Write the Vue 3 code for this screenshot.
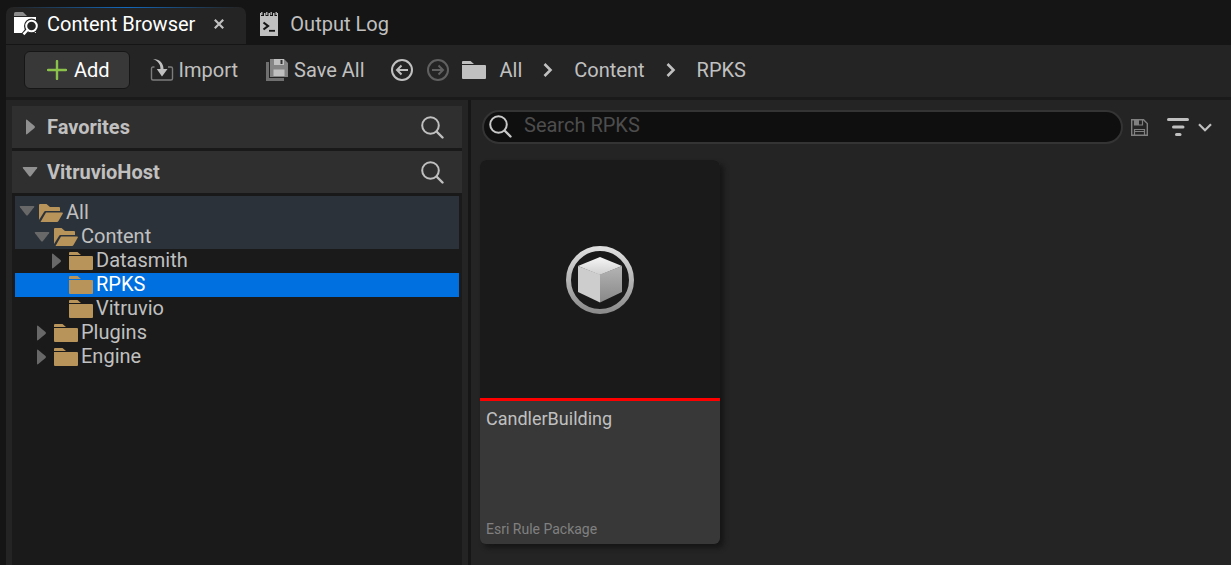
<script setup>
import { ref } from 'vue'

const query = ref('')
const crumbs = ['All', 'Content', 'RPKS']
const sections = [
  { name: 'Favorites', open: false },
  { name: 'VitruvioHost', open: true },
]
const nodes = [
  { name: 'All', depth: 0, state: 'open', path: true },
  { name: 'Content', depth: 1, state: 'open', path: true },
  { name: 'Datasmith', depth: 2, state: 'closed' },
  { name: 'RPKS', depth: 2, state: 'leaf', selected: true },
  { name: 'Vitruvio', depth: 2, state: 'leaf' },
  { name: 'Plugins', depth: 1, state: 'closed' },
  { name: 'Engine', depth: 1, state: 'closed' },
]
</script>

<template>
  <div class="window">
    <nav class="tabs" aria-label="Panels">
      <div class="tab active">
        <button class="tab-name" type="button">
          <svg width="25" height="24" viewBox="0 0 25 24" aria-hidden="true">
            <path d="M0 4V1.5Q0 0 1.5 0H9L13 4Z" fill="#8c8c8c" />
            <path d="M0 5H22V21H0Z" fill="#fff" />
            <circle cx="17.5" cy="14" r="7.5" fill="#242424" />
            <path d="M12 16L7 22L10 24L15 20Z" fill="#242424" />
            <circle cx="17.5" cy="14" r="5.3" fill="#242424" stroke="#fff" stroke-width="2" />
            <path d="M13.8 17.8L9.5 22.4" stroke="#fff" stroke-width="2.4" />
          </svg>
          <span>Content Browser</span>
        </button>
        <button class="close" type="button" aria-label="Close Content Browser">
          <svg width="10" height="10" viewBox="0 0 10 10" aria-hidden="true">
            <path d="M.8 .8L9.2 9.2M9.2 .8L.8 9.2" stroke="#c0c0c0" stroke-width="2.2" />
          </svg>
        </button>
      </div>
      <button class="tab output" type="button">
        <svg width="18" height="24" viewBox="0 0 18 24" aria-hidden="true">
          <path d="M0 1H1V4H4V1H5.5V4H8.5V1H10V4H13V1H14.5V4H17V1H18V24H0Z" fill="#c0c0c0" />
          <path d="M1.8 0V3M6.8 0V3M11.2 0V3M16.2 0V3" stroke="#c0c0c0" stroke-width="1.3" />
          <path d="M3.500 10.500L8 14L3.500 17.500" fill="none" stroke="#151515" stroke-width="2.2" />
          <path d="M9 18.800H15" stroke="#151515" stroke-width="1.8" />
        </svg>
        <span>Output Log</span>
      </button>
    </nav>

    <header class="toolbar">
      <button class="add" type="button">
        <svg width="20" height="20" viewBox="0 0 20 20" aria-hidden="true">
          <path d="M10 1V19M1 10H19" stroke="#8bc24a" stroke-width="2.4" stroke-linecap="round" />
        </svg>
        <span>Add</span>
      </button>
      <button class="tool import" type="button">
        <svg width="24" height="24" viewBox="0 0 24 24" aria-hidden="true">
          <path d="M4.500 9H3Q1.500 9 1.500 10.500V20.500Q1.500 22 3 22H21Q22.500 22 22.500 20.500V10.500Q22.500 9 21 9H18" fill="none" stroke="#7c7c7c" stroke-width="1.4" />
          <path d="M3 1C9.500 1 13.500 5 13.500 11H17.500L12 18.500L6.800 11H10.500C10.500 6 8 3 3 1Z" fill="#c0c0c0" />
        </svg>
        <span>Import</span>
      </button>
      <button class="tool save" type="button">
        <svg width="22" height="22" viewBox="0 0 22 22" aria-hidden="true">
          <path d="M0 3H3V19H18V22H0Z" fill="#707070" />
          <path d="M4 0H18L22 4V18H4Z" fill="#858585" />
          <path d="M8 0H18V6H8Z" fill="#c0c0c0" />
          <path d="M14.500 1H16.500V5H14.500Z" fill="#333" />
          <path d="M7.500 10.500H18.500V17H7.500Z" fill="#c0c0c0" />
        </svg>
        <span>Save All</span>
      </button>
      <button class="round back" type="button" aria-label="Back">
        <svg width="22" height="22" viewBox="0 0 22 22" fill="none" stroke="#c0c0c0" stroke-width="2" aria-hidden="true">
          <circle cx="11" cy="11" r="10" />
          <path d="M17 11H6.500M10.500 6.500L6 11L10.500 15.500" />
        </svg>
      </button>
      <button class="round forward" type="button" aria-label="Forward">
        <svg width="22" height="22" viewBox="0 0 22 22" fill="none" stroke="#606060" stroke-width="2" aria-hidden="true">
          <circle cx="11" cy="11" r="10" />
          <path d="M5 11H15.500M11.500 6.500L16 11L11.500 15.500" />
        </svg>
      </button>
      <button class="round folder" type="button" aria-label="Choose a path">
        <svg width="24" height="18" viewBox="0 0 24 18" fill="#c0c0c0" aria-hidden="true">
          <path d="M0 3V1Q0 0 1 0H8.500L12 3Z" />
          <path d="M0 4H23Q24 4 24 5V17Q24 18 23 18H1Q0 18 0 17Z" />
        </svg>
      </button>
      <nav class="crumbs" aria-label="Path">
        <template v-for="(crumb, i) in crumbs" :key="crumb">
          <svg v-if="i" width="10" height="14" viewBox="0 0 10 14" aria-hidden="true">
            <path d="M1.500 1L7.500 7L1.500 13" fill="none" stroke="#c0c0c0" stroke-width="2.600" />
          </svg>
          <a href="#">{{ crumb }}</a>
        </template>
      </nav>
    </header>

    <main class="body">
      <aside class="sources">
        <div v-for="s in sections" :key="s.name" class="section">
          <button class="section-name" type="button" :aria-expanded="s.open">
            <svg width="16" height="16" viewBox="0 0 16 16" fill="#909090" aria-hidden="true">
              <path v-if="s.open" d="M1.500 3H14.500Q16 3 15 4.300L9 12Q8 13 7 12L1 4.300Q0 3 1.500 3Z" />
              <path v-else d="M4 1.500Q4 0 5.300 1L12.500 7Q13.500 8 12.500 9L5.300 15Q4 16 4 14.500Z" />
            </svg>
            <span>{{ s.name }}</span>
          </button>
          <button class="find" type="button" :aria-label="'Search ' + s.name">
            <svg width="23" height="23" viewBox="0 0 23 23" fill="none" stroke="#c0c0c0" stroke-width="2" aria-hidden="true">
              <circle cx="9.500" cy="9.500" r="8.300" />
              <path d="M15.500 15.500L21.500 21.500" stroke-width="2.400" stroke-linecap="round" />
            </svg>
          </button>
        </div>
        <ul class="tree" role="tree">
          <li
            v-for="n in nodes"
            :key="n.name"
            role="treeitem"
            :aria-selected="!!n.selected"
            :class="['node', 'depth-' + n.depth, { path: n.path, selected: n.selected }]"
          >
            <svg class="arrow" width="16" height="16" viewBox="0 0 16 16" fill="#686868" aria-hidden="true">
              <path v-if="n.state === 'open'" d="M1.500 3H14.500Q16 3 15 4.300L9 12Q8 13 7 12L1 4.300Q0 3 1.500 3Z" />
              <path v-else-if="n.state === 'closed'" d="M3 1.500Q3 0 4.300 1L11.500 7Q12.500 8 11.500 9L4.300 15Q3 16 3 14.500Z" />
            </svg>
            <svg class="dir" width="24" height="18" viewBox="0 0 24 18" fill="#b8935a" aria-hidden="true">
              <template v-if="n.state === 'open'">
                <path d="M1 0H7.500L11 3H20Q21 3 21 4V7H6.500Q5.500 7 5 8L0 16V1Q0 0 1 0Z" />
                <path d="M7 8.500H23Q24.400 8.500 23.700 9.700L19.500 17Q19 18 18 18H1.500Z" />
              </template>
              <template v-else>
                <path d="M0 3V1Q0 0 1 0H8.500L12 3Z" />
                <path d="M0 4H23Q24 4 24 5V17Q24 18 23 18H1Q0 18 0 17Z" />
              </template>
            </svg>
            <span class="label">{{ n.name }}</span>
          </li>
        </ul>
      </aside>

      <section class="assets">
        <div class="filters">
          <label class="search">
            <svg width="23" height="23" viewBox="0 0 23 23" fill="none" stroke="#c8c8c8" stroke-width="2" aria-hidden="true">
              <circle cx="9.500" cy="9.500" r="8.300" />
              <path d="M15.500 15.500L21.500 21.500" stroke-width="2.400" stroke-linecap="round" />
            </svg>
            <input v-model="query" type="text" placeholder="Search RPKS" aria-label="Search RPKS" />
          </label>
          <button class="round keep" type="button" aria-label="Save search">
            <svg width="17" height="17" viewBox="0 0 17 17" fill="none" stroke="#808080" aria-hidden="true">
              <path d="M.7 .7H12.500L16.300 4.500V16.300H.7Z" stroke-width="1.400" />
              <path d="M3.500 1V6H11.500V1M3.500 16V10.500H13.500V16" stroke-width="1.200" />
              <path d="M4 1H8V6H4Z" fill="#808080" stroke="none" />
              <path d="M4 12.500H13" stroke-width="1" />
            </svg>
          </button>
          <button class="round filter" type="button" aria-label="Filters">
            <svg width="22" height="18" viewBox="0 0 22 18" fill="#c0c0c0" aria-hidden="true">
              <rect width="22" height="3" rx="1.500" />
              <rect x="5" y="7.500" width="12.500" height="3" rx="1.500" />
              <rect x="8" y="15" width="6.500" height="3" rx="1.500" />
            </svg>
            <svg width="14" height="9" viewBox="0 0 14 9" aria-hidden="true">
              <path d="M1 1.300L7 7.300L13 1.300" fill="none" stroke="#c0c0c0" stroke-width="2.200" />
            </svg>
          </button>
        </div>
        <div class="grid">
          <article class="card">
            <div class="thumb">
              <svg width="68" height="68" viewBox="0 0 68 68" aria-hidden="true">
                <defs>
                  <linearGradient id="ring" x1="0" y1="0" x2="0" y2="1">
                    <stop offset="0" stop-color="#dedede" />
                    <stop offset="1" stop-color="#8c8c8c" />
                  </linearGradient>
                  <linearGradient id="top" x1="0" y1="0" x2="0" y2="1">
                    <stop offset="0" stop-color="#f6f6f6" />
                    <stop offset="1" stop-color="#cfcfcf" />
                  </linearGradient>
                  <linearGradient id="side" x1="0" y1="0" x2="0" y2="1">
                    <stop offset="0" stop-color="#b4b4b4" />
                    <stop offset="1" stop-color="#888" />
                  </linearGradient>
                </defs>
                <circle cx="34" cy="34" r="31.500" fill="none" stroke="url(#ring)" stroke-width="5" />
                <path d="M34 11L56 20L34 29L12 20Z" fill="url(#top)" />
                <path d="M12 20L34 28.500V56.500L12 46Z" fill="#cdcdcd" />
                <path d="M56 20L34 28.500V56.500L56 46Z" fill="url(#side)" />
              </svg>
            </div>
            <div class="info">
              <span class="asset-name">CandlerBuilding</span>
              <span class="asset-type">Esri Rule Package</span>
            </div>
          </article>
        </div>
      </section>
    </main>
  </div>
</template>

<style>
html,
body {
  background: #151515;
}
</style>

<style scoped>
.window {
  box-sizing: border-box;
  display: flex;
  flex-direction: column;
  min-height: 100vh;
  padding-left: 6px;
  color: #c0c0c0;
  font: 20px/24px Roboto, sans-serif;
}
button {
  display: flex;
  align-items: center;
  margin: 0;
  padding: 0;
  border: 0;
  background: none;
  color: inherit;
  font: inherit;
}
svg {
  display: block;
  flex: none;
}
.tabs {
  display: flex;
  height: 37px;
  padding-top: 7px;
}
.tab {
  display: flex;
  align-items: center;
  box-sizing: border-box;
  padding-bottom: 3px;
}
.active {
  position: relative;
  gap: 19px;
  padding-left: 8px;
  padding-right: 22px;
  border-radius: 7px 7px 0 0;
  background: #242424;
  color: #fff;
}
.active::before {
  content: "";
  position: absolute;
  top: 0;
  left: 6px;
  right: 6px;
  height: 1px;
  background: linear-gradient(90deg, transparent, #1268bb, transparent);
}
.tab-name {
  gap: 8px;
}
.output {
  gap: 12px;
  margin-left: 14px;
}
.toolbar {
  display: flex;
  align-items: center;
  height: 50px;
  margin-top: 1px;
  padding-bottom: 2px;
  background: #242424;
  border-bottom: 3px solid #1a1a1a;
}
.add {
  box-sizing: border-box;
  gap: 7px;
  height: 38px;
  margin-left: 18px;
  padding: 0 19px 0 22px;
  border: 1px solid #161616;
  border-radius: 6px;
  background: #383838;
  color: #fff;
}
.tool {
  gap: 5px;
}
.import {
  margin-left: 20px;
}
.save {
  gap: 6px;
  margin-left: 28px;
}
.back {
  margin-left: 26px;
}
.forward {
  margin-left: 14px;
}
.folder {
  margin-left: 13px;
}
.crumbs {
  display: flex;
  align-items: center;
  gap: 21px;
  margin-left: 14px;
}
.crumbs a {
  color: inherit;
  text-decoration: none;
}
.body {
  display: flex;
  flex: 1;
}
.sources {
  display: flex;
  flex-direction: column;
  box-sizing: border-box;
  width: 465px;
  padding: 6px 6px 0;
  border-right: 3px solid #161616;
  background: #242424;
}
.section {
  display: flex;
  align-items: center;
  justify-content: space-between;
  height: 42px;
  padding: 0 18px 0 10px;
  border-bottom: 3px solid #191919;
  background: #2f2f2f;
  font-weight: 700;
}
.section-name {
  gap: 9px;
}
.tree {
  flex: 1;
  margin: 0;
  padding: 0 3px;
  background: #1a1a1a;
  list-style: none;
}
.node {
  display: flex;
  align-items: center;
  height: 24px;
}
.dir {
  margin: 0 3px 0 4px;
}
.label {
  padding-bottom: 2px;
}
.depth-0 {
  height: 29px;
  padding-left: 4px;
}
.depth-0 .dir,
.depth-0 .label {
  margin-top: 5px;
}
.depth-1 {
  padding-left: 19px;
}
.depth-2 {
  padding-left: 34px;
}
.path {
  background: #2c323a;
}
.selected {
  background: #0070e0;
  color: #fff;
}
.assets {
  flex: 1;
  min-width: 0;
  background: #242424;
}
.filters {
  display: flex;
  align-items: center;
  padding: 10px 19px 0 11px;
}
.search {
  display: flex;
  flex: 1;
  align-items: center;
  gap: 12px;
  box-sizing: border-box;
  height: 34px;
  padding: 0 16px 1px 5px;
  border: 2px solid #343434;
  border-radius: 17px;
  background: #0f0f0f;
}
.search input {
  flex: 1;
  min-width: 0;
  padding: 0 0 4px;
  border: 0;
  outline: 0;
  background: none;
  color: #c0c0c0;
  font: inherit;
}
.search input::placeholder {
  color: #4d4d4d;
  opacity: 1;
}
.keep {
  margin-left: 8px;
}
.filter {
  gap: 9px;
  margin-left: 19px;
}
.grid {
  display: flex;
  flex-wrap: wrap;
  padding: 16px 9px;
}
.card {
  width: 240px;
  border-radius: 6px;
  background: #383838;
  box-shadow: 4px 4px 5px #161616;
  overflow: hidden;
}
.thumb {
  display: flex;
  align-items: center;
  justify-content: center;
  height: 236px;
  padding-top: 2px;
  border-bottom: 3px solid #f00;
  background: #1a1a1a;
}
.info {
  display: flex;
  flex-direction: column;
  justify-content: space-between;
  box-sizing: border-box;
  height: 143px;
  padding: 6px 6px 5px;
}
.asset-name {
  font-size: 18px;
}
.asset-type {
  color: #808080;
  font-size: 14px;
  line-height: 20px;
}
</style>
